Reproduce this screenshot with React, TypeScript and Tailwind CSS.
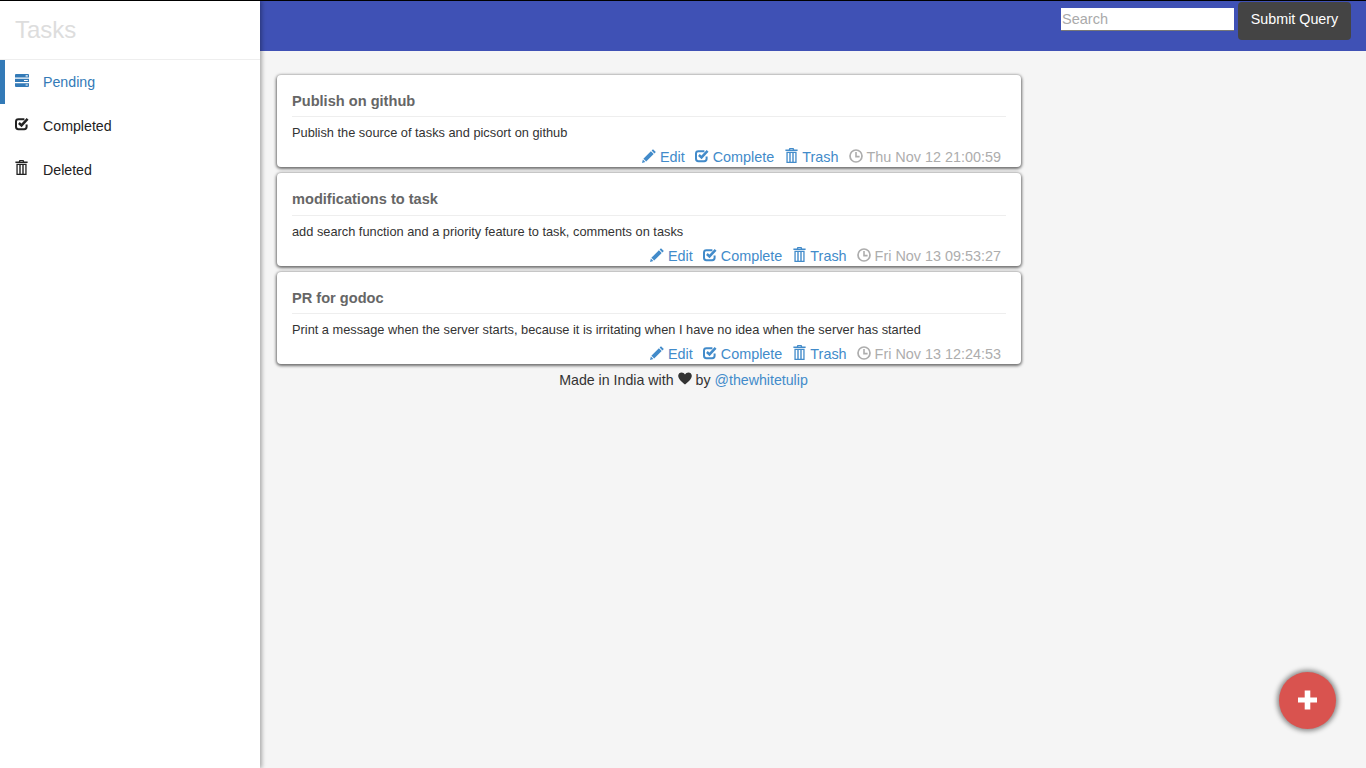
import React from "react";

const Pencil = ({ className = "" }: { className?: string }) => (
  <svg viewBox="0 0 14 14" className={className} fill="currentColor">
    <path d="M11 0.2 L13.8 3 L12.4 4.4 L9.6 1.6 Z" />
    <path d="M8.9 2.3 L11.7 5.1 L4.2 12.6 L1.4 9.8 Z" />
    <path d="M0.9 10.6 L3.4 13.1 L0 14 Z" />
  </svg>
);

const Check = ({ className = "" }: { className?: string }) => (
  <svg viewBox="0 0 14 14" className={className} fill="none" stroke="currentColor">
    <path d="M11.6 7.6 V9.8 A2.4 2.4 0 0 1 9.2 12.2 H3.4 A2.4 2.4 0 0 1 1 9.8 V4.6 A2.4 2.4 0 0 1 3.4 2.2 H9.4" strokeWidth="2" />
    <path d="M3.9 6 L6.5 8.4 L12.6 1.8" strokeWidth="2.5" />
  </svg>
);

const Trash = ({ className = "" }: { className?: string }) => (
  <svg viewBox="0 0 13 15" className={className} fill="currentColor">
    <path d="M4.4 0 H8.6 L9.2 1.4 H12.6 V3 H0.4 V1.4 H3.8 Z M5.4 0.9 L5.2 1.4 H7.8 L7.6 0.9 Z" fillRule="evenodd" />
    <path fillRule="evenodd" d="M1.4 3.8 H11.6 V15 H1.4 Z M2.7 5 V13.8 H4.3 V5 Z M5.7 5 V13.8 H7.3 V5 Z M8.7 5 V13.8 H10.3 V5 Z" />
  </svg>
);

const Tasks = ({ className = "" }: { className?: string }) => (
  <svg viewBox="0 0 14 13" className={className} fill="currentColor">
    <path fillRule="evenodd" d="M1 0 H13 A1 1 0 0 1 14 1 V3.6 H0 V1 A1 1 0 0 1 1 0 Z M10.6 1.3 V2.4 H12.8 V1.3 Z" />
    <path fillRule="evenodd" d="M0 4.7 H14 V8.1 H0 Z M9 5.9 V7 H12.8 V5.9 Z" />
    <path fillRule="evenodd" d="M0 9.2 H14 V12 A1 1 0 0 1 13 13 H1 A1 1 0 0 1 0 12 Z M10.6 10.5 V11.6 H12.8 V10.5 Z" />
  </svg>
);

const Clock = ({ className = "" }: { className?: string }) => (
  <svg viewBox="0 0 14 14" className={className} fill="none" stroke="currentColor">
    <circle cx="7" cy="7" r="6" strokeWidth="1.7" />
    <path d="M7 3 V7.6 H10.6" strokeWidth="1.6" />
  </svg>
);

const Heart = ({ className = "" }: { className?: string }) => (
  <svg viewBox="0 0 14 13" className={className} fill="currentColor">
    <path d="M7 12.6 C4.6 10.4 0.2 7.4 0.2 3.8 C0.2 1.6 1.9 0.4 3.6 0.4 C5 0.4 6.3 1.2 7 2.6 C7.7 1.2 9 0.4 10.4 0.4 C12.1 0.4 13.8 1.6 13.8 3.8 C13.8 7.4 9.4 10.4 7 12.6 Z" />
  </svg>
);

const tasks = [
  {
    title: "Publish on github",
    body: "Publish the source of tasks and picsort on github",
    date: "Thu Nov 12 21:00:59",
    h: "h-[92px]",
    hh: "h-[25px]",
  },
  {
    title: "modifications to task",
    body: "add search function and a priority feature to task, comments on tasks",
    date: "Fri Nov 13 09:53:27",
    h: "h-[93px]",
    hh: "h-[26px]",
  },
  {
    title: "PR for godoc",
    body: "Print a message when the server starts, because it is irritating when I have no idea when the server has started",
    date: "Fri Nov 13 12:24:53",
    h: "h-[92px]",
    hh: "h-[25px]",
  },
];

const Action = ({ icon, label }: { icon: React.ReactNode; label: string }) => (
  <span className="flex items-center text-[#428bca]">
    {icon}
    <span className="ml-[4px]">{label}</span>
  </span>
);

const Card = ({ t }: { t: (typeof tasks)[number] }) => (
  <div className={`${t.h} w-[744px] rounded-[4px] bg-white px-[15px] shadow-[0_1px_3px_1px_rgba(0,0,0,0.55)] flex flex-col`}>
    <h3 className={`mt-[17px] ${t.hh} border-b border-[#eeeeee] text-[14.6px] leading-[18px] font-bold text-[#666666]`}>{t.title}</h3>
    <p className="mt-[8px] text-[12.8px] leading-[16px] text-[#333333]">{t.body}</p>
    <div className="mt-[6px] flex items-center justify-end gap-[10px] pr-[5px] text-[14.4px] leading-[20px]">
      <Action icon={<Pencil className="h-[14px] w-[14px] -translate-y-[1px]" />} label="Edit" />
      <Action icon={<Check className="h-[14px] w-[14px] -translate-y-[1px]" />} label="Complete" />
      <Action icon={<Trash className="ml-[1px] h-[15px] w-[13px] -translate-y-[2px]" />} label="Trash" />
      <span className="flex items-center text-[#adadad]">
        <Clock className="h-[14px] w-[14px] -translate-y-[1px]" />
        <span className="ml-[4px]">{t.date}</span>
      </span>
    </div>
  </div>
);

const NavItem = ({
  icon,
  label,
  active = false,
}: {
  icon: React.ReactNode;
  label: string;
  active?: boolean;
}) => (
  <div
    className={`flex h-[44px] items-center border-l-[5px] pl-[10px] text-[14.2px] ${
      active ? "border-[#337ab7] text-[#337ab7]" : "border-transparent text-[#222222]"
    }`}
  >
    <span className="flex w-[28px] -translate-y-[2px]">{icon}</span>
    <span className="pt-[2px]">{label}</span>
  </div>
);

export default function App() {
  return (
    <div className="flex h-[768px] w-[1366px] flex-col overflow-hidden border-t border-black bg-[#f5f5f5] font-['Liberation_Sans',Arial,sans-serif] text-[14px] text-[#333333]">
      <div className="flex flex-1 min-h-0">
        <aside className="relative z-10 w-[260px] shrink-0 bg-white shadow-[2px_0_4px_rgba(0,0,0,0.3)]">
          <div className="h-[59px] border-b border-[#eeeeee] pl-[15px] pt-[14px] text-[24px] leading-[29px] text-[#dddddd]">Tasks</div>
          <nav>
            <NavItem active icon={<Tasks className="h-[13px] w-[14px]" />} label="Pending" />
            <NavItem icon={<Check className="h-[14px] w-[14px] text-[#222222]" />} label="Completed" />
            <NavItem icon={<Trash className="h-[15px] w-[13px] -translate-y-[1px] text-[#222222]" />} label="Deleted" />
          </nav>
        </aside>
        <div className="flex min-w-0 flex-1 flex-col">
          <header className="flex h-[50px] shrink-0 items-start justify-end bg-[#3f51b5] pr-[15px]">
            <input
              placeholder="Search"
              className="mt-[7px] h-[23px] w-[173px] border-b border-[#777777] bg-white pl-[1px] text-[14.5px] text-[#333333] placeholder:text-[#aaaaaa] outline-none"
            />
            <button className="ml-[4px] mt-[1px] h-[38px] w-[113px] rounded-[4px] bg-[#444444] pb-[2px] text-[14.3px] text-white">Submit Query</button>
          </header>
          <main className="flex w-[744px] ml-[17px] flex-col gap-[6px] pt-[24px]">
            {tasks.map((t) => (
              <Card key={t.title} t={t} />
            ))}
            <div className="flex h-[20px] w-[813px] items-center justify-center pt-[2px] text-[14.2px] text-[#333333]">
              Made in India with
              <Heart className="mx-[4px] h-[13px] w-[14px] -translate-y-[3px] text-[#333333]" />
              by<span className="ml-[4px] text-[#428bca]">@thewhitetulip</span>
            </div>
          </main>
        </div>
      </div>
      <button className="fixed left-[1279px] top-[672px] flex h-[57px] w-[57px] items-center justify-center rounded-full bg-[#d9534f] shadow-[0_0_5px_2px_rgba(0,0,0,0.45)]">
        <svg viewBox="0 0 20 20" className="h-[20px] w-[20px] -translate-x-[0.5px] -translate-y-[1px]" fill="white">
          <path d="M7.2 0.5 H12.8 V7.5 H19.5 V12.5 H12.8 V19.5 H7.2 V12.5 H0.5 V7.5 H7.2 Z" />
        </svg>
      </button>
    </div>
  );
}
